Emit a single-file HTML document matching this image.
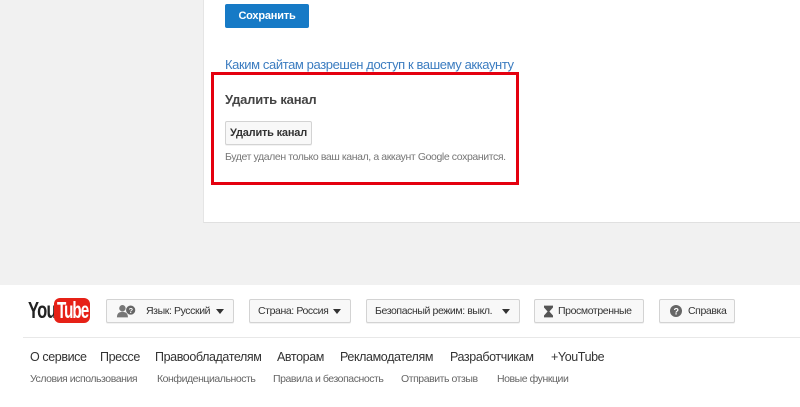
<!DOCTYPE html>
<html><head><meta charset="utf-8"><style>
body{margin:0;width:800px;height:407px;background:#fff;font-family:"Liberation Sans",Arial,sans-serif;position:relative;overflow:hidden}
.a{position:absolute;white-space:nowrap}
.btn{position:absolute;height:24px;border:1px solid #d3d3d3;background:#f8f8f8;box-sizing:border-box;font-size:10.5px;color:#333;line-height:22px;border-radius:2px;box-shadow:0 1px 0 rgba(0,0,0,.05);white-space:nowrap;letter-spacing:-0.4px;overflow:hidden}
.arr{position:absolute;right:9px;top:9px;width:0;height:0;border-left:4px solid transparent;border-right:4px solid transparent;border-top:5px solid #333}
.l1{position:absolute;top:350px;font-size:12.5px;color:#333;letter-spacing:-0.4px;white-space:nowrap}
.l2{position:absolute;top:373px;font-size:10.5px;color:#666;letter-spacing:-0.45px;white-space:nowrap}
</style></head><body>
<div class="a" style="left:0;top:0;width:800px;height:285px;background:#f1f1f1"></div>
<div class="a" style="left:203px;top:0;width:597px;height:222px;background:#fff;border-left:1px solid #e5e5e5;border-bottom:1px solid #e0e0e0"></div>
<div class="a" style="left:225px;top:4px;width:84px;height:24px;background:#167ac6;border-radius:2px;color:#fff;font-size:11px;font-weight:bold;text-align:center;line-height:24px;letter-spacing:-0.2px">Сохранить</div>
<div class="a" style="left:225px;top:57px;font-size:13px;color:#3b7cc0;letter-spacing:-0.4px">Каким сайтам разрешен доступ к вашему аккаунту</div>
<div class="a" style="left:211px;top:72px;width:308px;height:113px;border:3px solid #e4000f;box-sizing:border-box"></div>
<div class="a" style="left:225px;top:92px;font-size:13px;font-weight:bold;color:#444;letter-spacing:-0.2px">Удалить канал</div>
<div class="btn" style="left:225px;top:121px;width:87px;text-align:center;font-weight:bold;font-size:11px;letter-spacing:-0.2px">Удалить канал</div>
<div class="a" style="left:225px;top:151px;font-size:10.5px;color:#767676;letter-spacing:-0.4px">Будет удален только ваш канал, а аккаунт Google сохранится.</div>

<div class="a" style="left:28px;top:298px;font-size:23px;line-height:25px;font-weight:bold;color:#222;letter-spacing:-1px;transform:scaleX(0.72);transform-origin:left top">You</div>
<div class="a" style="left:54px;top:298px;width:36px;height:25px;background:#e62117;border-radius:6px;"></div>
<div class="a" style="left:55px;top:298px;font-size:23px;line-height:25px;font-weight:bold;color:#fff;letter-spacing:-1.5px;transform:scaleX(0.66);transform-origin:left top;padding-left:3px">Tube</div>

<div class="btn" style="left:106px;top:299px;width:128px;padding-left:9px">
<svg width="22" height="14" style="vertical-align:middle;margin-right:8px" viewBox="0 0 24 14"><circle cx="7" cy="4" r="3.5" fill="#777"/><path d="M1 14c0-5 3-6 6-6s6 1 6 6z" fill="#777"/><circle cx="16" cy="6" r="5" fill="#666"/><text x="16" y="9" font-size="8" fill="#fff" text-anchor="middle" font-weight="bold">?</text></svg>Язык: Русский<span class="arr"></span></div>
<div class="btn" style="left:249px;top:299px;width:102px;padding-left:8px">Страна: Россия<span class="arr"></span></div>
<div class="btn" style="left:366px;top:299px;width:154px;padding-left:8px">Безопасный режим: выкл.<span class="arr"></span></div>
<div class="btn" style="left:534px;top:299px;width:110px;padding-left:9px"><svg width="9" height="13" style="vertical-align:middle;margin-right:5px" viewBox="0 0 10 13"><path d="M0 0h10v2L6 6.5 10 11v2H0v-2l4-4.5L0 2z" fill="#555"/></svg>Просмотренные</div>
<div class="btn" style="left:659px;top:299px;width:76px;padding-left:10px"><svg width="12" height="12" style="vertical-align:middle;margin-right:6px" viewBox="0 0 12 12"><circle cx="6" cy="6" r="6" fill="#666"/><text x="6" y="9.5" font-size="9" fill="#fff" text-anchor="middle" font-weight="bold">?</text></svg>Справка</div>

<div class="a" style="left:23px;top:337px;width:777px;height:1px;background:#e8e8e8"></div>
<div class="l1" style="left:30px">О сервисе</div>
<div class="l1" style="left:100px">Прессе</div>
<div class="l1" style="left:155px">Правообладателям</div>
<div class="l1" style="left:277px">Авторам</div>
<div class="l1" style="left:340px">Рекламодателям</div>
<div class="l1" style="left:450px">Разработчикам</div>
<div class="l1" style="left:551px">+YouTube</div>
<div class="l2" style="left:30px">Условия использования</div>
<div class="l2" style="left:157px">Конфиденциальность</div>
<div class="l2" style="left:273px">Правила и безопасность</div>
<div class="l2" style="left:401px">Отправить отзыв</div>
<div class="l2" style="left:497px">Новые функции</div>
</body></html>
